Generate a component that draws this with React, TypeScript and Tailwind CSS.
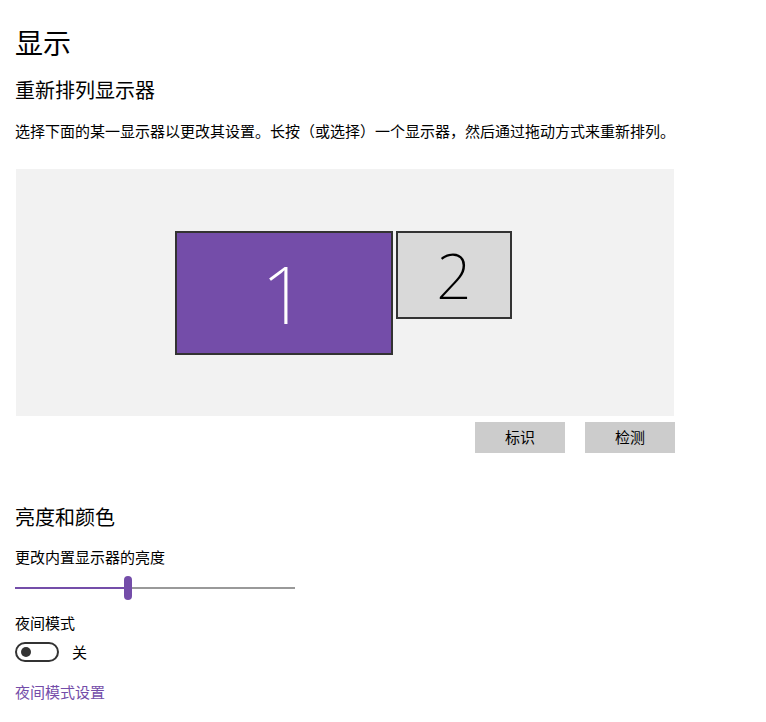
import React from 'react';

const font = { fontFamily: '"Noto Sans CJK SC", "Noto Sans", sans-serif' };

export default function App() {
  return (
    <main className="min-h-[722px] w-[766px] bg-white pl-[15px] pt-[22px] text-black" style={font}>
      <h1 className="text-[28px] leading-[40px] font-normal">显示</h1>
      <h2 className="mt-[14px] text-[20px] leading-[28px] font-normal">重新排列显示器</h2>
      <p className="mt-[17px] text-[15px] leading-[20px]">
        选择下面的某一显示器以更改其设置。长按（或选择）一个显示器，然后通过拖动方式来重新排列。
      </p>

      {/* arrangement canvas */}
      <div className="relative ml-px mt-[28px] h-[247px] w-[658px] bg-[#f2f2f2]">
        <div className="absolute left-[159px] top-[62px] flex h-[124px] w-[218px] items-center justify-center border-2 border-[#333333] bg-[#744da9]">
          <span className="text-[80px] font-extralight leading-none text-white" style={{ fontFamily: '"Noto Sans", sans-serif' }}>1</span>
        </div>
        <div className="absolute left-[380px] top-[62px] flex h-[88px] w-[116px] items-center justify-center border-2 border-[#333333] bg-[#d9d9d9]">
          <span className="text-[62px] font-extralight leading-none text-black" style={{ fontFamily: '"Noto Sans", sans-serif' }}>2</span>
        </div>
      </div>

      <div className="mt-[6px] flex w-[660px] justify-end gap-[20px]">
        <button className="h-[31px] w-[90px] bg-[#cccccc] text-[15px]">标识</button>
        <button className="h-[31px] w-[90px] bg-[#cccccc] text-[15px]">检测</button>
      </div>

      <h2 className="mt-[50px] text-[20px] leading-[28px] font-normal">亮度和颜色</h2>
      <p className="mt-[16px] text-[15px] leading-[20px]">更改内置显示器的亮度</p>

      <div className="relative mt-[9px] h-[24px] w-[280px]">
        <div className="absolute left-0 top-[11px] h-[2px] w-[112px] bg-[#744da9]" />
        <div className="absolute left-[112px] top-[11px] h-[2px] w-[168px] bg-[#999999]" />
        <div className="absolute left-[109px] top-0 h-[24px] w-[8px] rounded-full bg-[#744da9]" />
      </div>

      <p className="mt-[13px] text-[15px] leading-[20px]">夜间模式</p>
      <div className="mt-[9px] flex items-center gap-[13px]">
        <div className="flex h-[20px] w-[44px] items-center rounded-full border-2 border-[#333333] pl-[4px]">
          <div className="h-[10px] w-[10px] rounded-full bg-[#333333]" />
        </div>
        <span className="text-[15px] leading-[20px]">关</span>
      </div>

      <a className="mt-[20px] block text-[15px] leading-[20px] text-[#744da9]">夜间模式设置</a>
    </main>
  );
}
